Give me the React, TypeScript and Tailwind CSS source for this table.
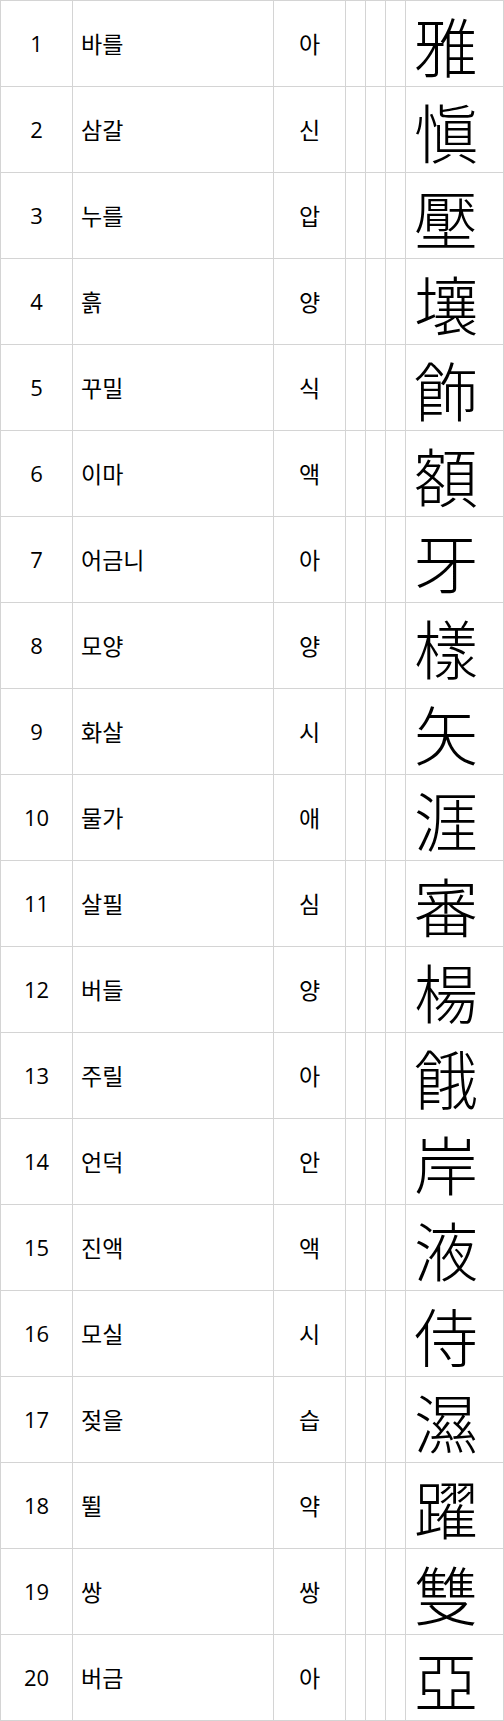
import React from 'react'

const rows: [string, string, string][] = [
  ['바를', '아', '雅'],
  ['삼갈', '신', '愼'],
  ['누를', '압', '壓'],
  ['흙', '양', '壤'],
  ['꾸밀', '식', '飾'],
  ['이마', '액', '額'],
  ['어금니', '아', '牙'],
  ['모양', '양', '樣'],
  ['화살', '시', '矢'],
  ['물가', '애', '涯'],
  ['살필', '심', '審'],
  ['버들', '양', '楊'],
  ['주릴', '아', '餓'],
  ['언덕', '안', '岸'],
  ['진액', '액', '液'],
  ['모실', '시', '侍'],
  ['젖을', '습', '濕'],
  ['뛸', '약', '躍'],
  ['쌍', '쌍', '雙'],
  ['버금', '아', '亞']
]

const cell = 'border border-[#d4d4d4] p-0'

export default function App() {
  return (
    <div lang="ko" className="bg-white text-black" style={{ fontFamily: '"Noto Sans CJK KR", "Noto Sans", sans-serif' }}>
      <table className="w-[504px] table-fixed border-collapse">
        <colgroup>
          <col className="w-[72px]" />
          <col className="w-[201px]" />
          <col className="w-[72px]" />
          <col className="w-[20px]" />
          <col className="w-[20px]" />
          <col className="w-[20px]" />
          <col />
        </colgroup>
        <tbody>
          {rows.map(([word, sound, hanja], i) => (
            <tr key={i} className="h-[86px]">
              <td className={`${cell} text-center font-['Open_Sans',sans-serif] text-[22px]`}>{i + 1}</td>
              <td className={`${cell} pl-2 text-[23px]`}>{word}</td>
              <td className={`${cell} text-center text-[23px]`}>{sound}</td>
              <td className={cell}></td>
              <td className={cell}></td>
              <td className={cell}></td>
              <td className={`${cell} pl-2 text-[64px] font-light leading-none`}>{hanja}</td>
            </tr>
          ))}
        </tbody>
      </table>
    </div>
  )
}
